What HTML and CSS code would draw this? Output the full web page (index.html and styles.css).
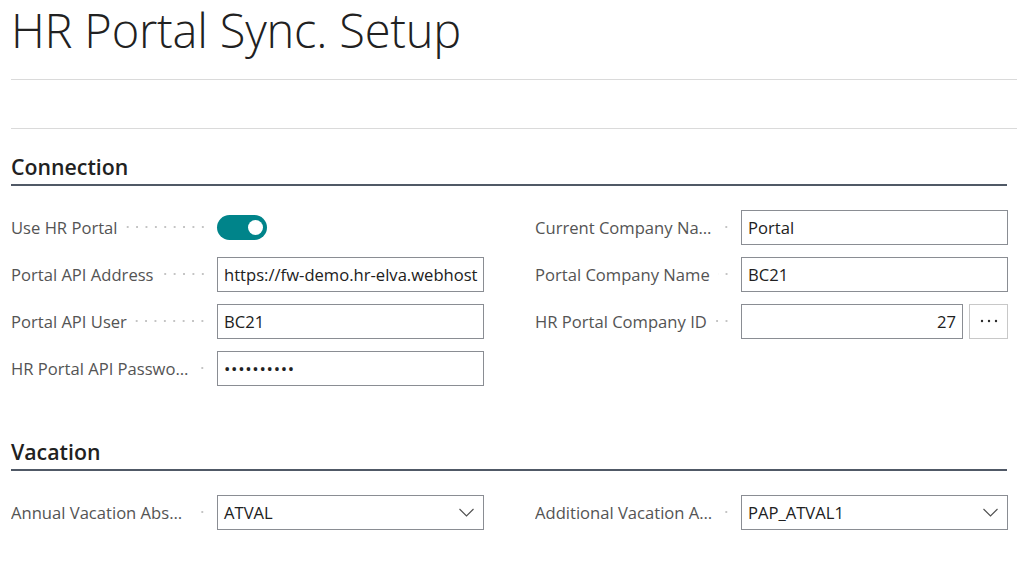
FILE: index.html
```html
<!DOCTYPE html>
<html lang="en">
<head>
<meta charset="utf-8">
<title>HR Portal Sync. Setup</title>
<link rel="stylesheet" href="styles.css">
</head>
<body>
<div class="page">
  <header class="page-head">
    <h1 class="title">HR Portal Sync. Setup</h1>
  </header>
  <div class="action-bar"></div>

  <section class="group">
    <h2 class="group-title">Connection</h2>
    <div class="fields">
      <div class="col">
        <div class="field">
          <div class="label"><span class="label-text">Use HR Portal</span><span class="leader"></span></div>
          <div class="control"><span class="toggle"><span class="knob"></span></span></div>
        </div>
        <div class="field">
          <div class="label"><span class="label-text">Portal API Address</span><span class="leader"></span></div>
          <div class="control"><div class="input">https://fw-demo.hr-elva.webhost</div></div>
        </div>
        <div class="field">
          <div class="label"><span class="label-text">Portal API User</span><span class="leader"></span></div>
          <div class="control"><div class="input">BC21</div></div>
        </div>
        <div class="field">
          <div class="label"><span class="label-text">HR Portal API Password</span><span class="leader"></span></div>
          <div class="control"><div class="input password">••••••••••</div></div>
        </div>
      </div>
      <div class="col">
        <div class="field">
          <div class="label"><span class="label-text">Current Company Name</span><span class="leader"></span></div>
          <div class="control"><div class="input">Portal</div></div>
        </div>
        <div class="field">
          <div class="label"><span class="label-text">Portal Company Name</span><span class="leader"></span></div>
          <div class="control"><div class="input">BC21</div></div>
        </div>
        <div class="field">
          <div class="label"><span class="label-text">HR Portal Company ID</span><span class="leader"></span></div>
          <div class="control with-button">
            <div class="input number">27</div>
            <button class="assist" type="button" aria-label="More options">
              <svg width="18" height="4" viewBox="0 0 18 4"><circle cx="2" cy="2" r="1.2" fill="#2b2b2b"/><circle cx="9" cy="2" r="1.2" fill="#2b2b2b"/><circle cx="16" cy="2" r="1.2" fill="#2b2b2b"/></svg>
            </button>
          </div>
        </div>
      </div>
    </div>
  </section>

  <section class="group group-vacation">
    <h2 class="group-title">Vacation</h2>
    <div class="fields">
      <div class="col">
        <div class="field">
          <div class="label"><span class="label-text">Annual Vacation Absence Code</span><span class="leader"></span></div>
          <div class="control">
            <div class="input select"><span class="select-value">ATVAL</span>
              <svg class="chev" width="15" height="9" viewBox="0 0 15 9"><path d="M0.5 1 L7.5 8 L14.5 1" fill="none" stroke="#505050" stroke-width="1.1"/></svg>
            </div>
          </div>
        </div>
      </div>
      <div class="col">
        <div class="field">
          <div class="label"><span class="label-text">Additional Vacation Absence Code</span><span class="leader"></span></div>
          <div class="control">
            <div class="input select"><span class="select-value">PAP_ATVAL1</span>
              <svg class="chev" width="15" height="9" viewBox="0 0 15 9"><path d="M0.5 1 L7.5 8 L14.5 1" fill="none" stroke="#505050" stroke-width="1.1"/></svg>
            </div>
          </div>
        </div>
      </div>
    </div>
  </section>
</div>
</body>
</html>
```

FILE: styles.css
```css
* { box-sizing: border-box; }
html, body { margin: 0; padding: 0; background: #ffffff; }
body {
  font-family: "Open Sans", "Noto Sans", sans-serif;
  color: #212121;
  width: 1017px;
  height: 582px;
  overflow: hidden;
}
.page { padding-left: 11px; }

.page-head {
  border-bottom: 1px solid #dadada;
  height: 80px;
}
.title {
  margin: 0;
  font-family: "Open Sans", sans-serif;
  font-weight: 300;
  font-size: 47px;
  line-height: 60px;
  color: #212121;
  letter-spacing: -0.2px;
}
.action-bar {
  height: 49px;
  border-bottom: 1px solid #dadada;
}

.group { margin-right: 10px; }
.group-title {
  margin: 0;
  padding-top: 22px;
  padding-bottom: 2px;
  font-size: 21.3px;
  line-height: 31px;
  font-weight: 600;
  color: #212121;
  border-bottom: 2px solid #505966;
}
.group-vacation .group-title { padding-top: 51px; }

.fields {
  display: grid;
  grid-template-columns: 473px 473px;
  column-gap: 51px;
  padding-top: 24px;
}
.col { display: flex; flex-direction: column; gap: 13px; }
.field {
  display: flex;
  align-items: center;
  height: 34px;
}
.label {
  width: 206px;
  flex: none;
  display: flex;
  align-items: center;
  padding-right: 10px;
  font-size: 16.6px;
  color: #545454;
  white-space: nowrap;
}
.label-text {
  overflow: hidden;
  text-overflow: ellipsis;
  flex: 0 1 auto;
  min-width: 0;
}
.leader {
  flex: 1 0 10px;
  margin-left: 8px;
  height: 4px;
  background-image: radial-gradient(circle, #c4c4c4 1px, transparent 1.3px);
  background-size: 9.4px 4px;
  background-position: right center;
  background-repeat: repeat-x;
}
.control {
  flex: 1;
  display: flex;
  align-items: center;
  min-width: 0;
}
.input {
  flex: 1;
  height: 35px;
  border: 1px solid #8a8d93;
  padding: 0 6px;
  display: flex;
  align-items: center;
  font-size: 16.6px;
  color: #212121;
  white-space: nowrap;
  overflow: hidden;
}
.password { font-size: 17px; letter-spacing: 0.7px; }
.number { justify-content: flex-end; }
.with-button { gap: 6px; }
.assist {
  width: 39px;
  height: 35px;
  flex: none;
  border: 1px solid #c8c8c8;
  background: #ffffff;
  padding: 0;
  display: flex;
  align-items: center;
  justify-content: center;
}
.assist svg { display: block; }
.select { justify-content: space-between; padding-right: 9px; }
.chev { display: block; flex: none; }

.toggle {
  width: 50px;
  height: 25px;
  border-radius: 13px;
  background: #00848a;
  display: flex;
  align-items: center;
  justify-content: flex-end;
  padding-right: 4px;
}
.knob {
  width: 15px;
  height: 15px;
  border-radius: 50%;
  background: #ffffff;
}
```
